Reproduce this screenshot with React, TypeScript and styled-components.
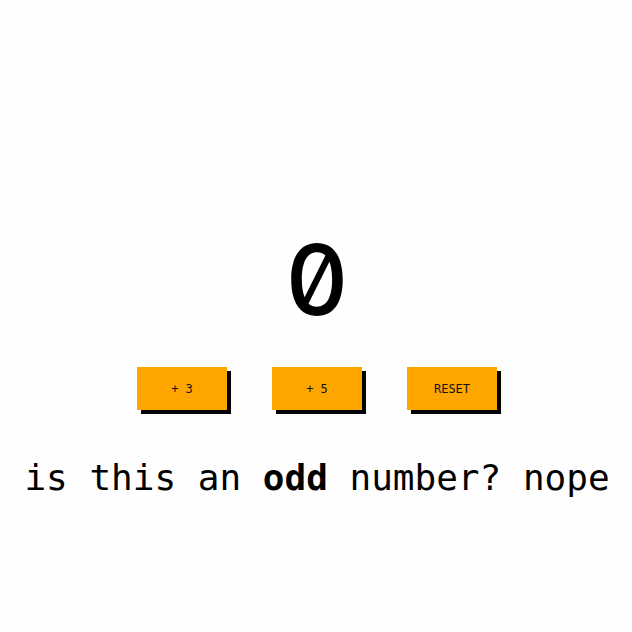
import styled, { createGlobalStyle } from "styled-components";
import { useState } from "react";

const GlobalStyle = createGlobalStyle`
  body {
    margin: 0;
    background: #fefefe;
    font-family: "DejaVu Sans Mono", "Liberation Mono", monospace;
  }
`;

const Page = styled.div`
  height: 100vh;
  box-sizing: border-box;
  padding-top: 231px;
  padding-left: 2px;
  display: flex;
  flex-direction: column;
  align-items: center;
`;

const Count = styled.div`
  font-family: Inter, "DejaVu Sans Mono", monospace;
  font-feature-settings: "zero" 1, "tnum" 1;
  font-weight: 500;
  font-size: 98px;
  line-height: 1;
  color: #000;
`;

const Buttons = styled.div`
  display: flex;
  gap: 45px;
  margin-top: 38px;
`;

const Button = styled.button`
  width: 90px;
  height: 43px;
  border: none;
  background: #ffa500;
  box-shadow: 4px 4px 0 #000;
  font-family: inherit;
  font-size: 12px;
  color: #111;
  cursor: pointer;
`;

const Question = styled.p`
  font-size: 36px;
  margin: 47px 0 0;
  color: #000;
`;

function App() {
  const [count, setCount] = useState(0);
  return (
    <Page>
      <GlobalStyle />
      <Count>{count}</Count>
      <Buttons>
        <Button onClick={() => setCount(count + 3)}>+ 3</Button>
        <Button onClick={() => setCount(count + 5)}>+ 5</Button>
        <Button onClick={() => setCount(0)}>RESET</Button>
      </Buttons>
      <Question>
        is this an <b>odd</b> number? {count % 2 === 1 ? "yes" : "nope"}
      </Question>
    </Page>
  );
}

export default App;
